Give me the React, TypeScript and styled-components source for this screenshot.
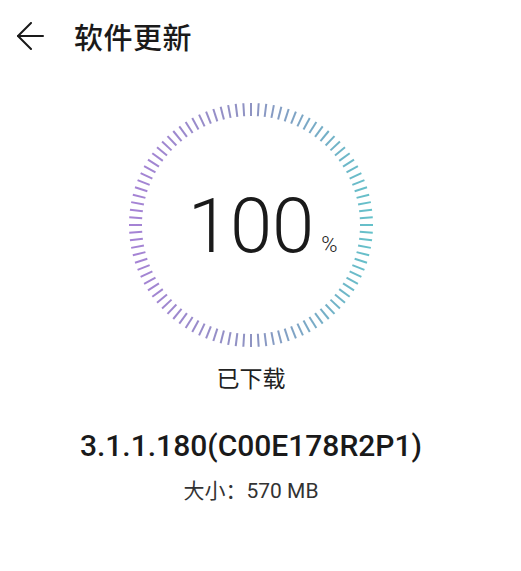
import React from "react";
import styled, { createGlobalStyle } from "styled-components";

const Global = createGlobalStyle`
  html, body { margin: 0; padding: 0; background: #ffffff; }
  body { font-family: Roboto, "Noto Sans CJK SC", sans-serif; color: #1a1a1a; }
`;

const Page = styled.div`
  width: 502px;
  display: flex;
  flex-direction: column;
  align-items: center;
`;

const Header = styled.header`
  align-self: stretch;
  height: 72px;
  display: flex;
  align-items: center;
  padding-left: 16px;
  gap: 30px;
`;

const BackButton = styled.button`
  border: 0;
  background: none;
  padding: 0;
  width: 28px;
  height: 28px;
  display: flex;
  align-items: center;
  justify-content: center;
  color: #1a1a1a;
`;

const Title = styled.h1`
  margin: 0;
  font-family: "Noto Sans CJK SC", sans-serif;
  font-size: 29px;
  font-weight: 500;
  line-height: 1;
  letter-spacing: 0.5px;
  color: #1a1a1a;
`;

const Ring = styled.div`
  margin-top: 28px;
  width: 250px;
  height: 250px;
  display: grid;
  place-items: center;
  & > * { grid-area: 1 / 1; }
`;

const Value = styled.div`
  position: relative;
  font-family: Roboto, sans-serif;
  font-weight: 300;
  font-size: 76px;
  line-height: 76px;
  color: #1a1a1a;
  margin-top: 2px;
`;

const Percent = styled.span`
  position: absolute;
  left: 100%;
  bottom: 8px;
  margin-left: 7px;
  font-size: 22px;
  line-height: 1;
  font-weight: 300;
`;

const Status = styled.div`
  margin-top: 12px;
  font-family: "Noto Sans CJK SC", sans-serif;
  font-size: 23px;
  line-height: 30px;
  color: #222;
`;

const Version = styled.div`
  margin-top: 37px;
  font-family: Roboto, sans-serif;
  font-weight: 500;
  font-size: 30px;
  line-height: 34px;
  color: #1a1a1a;
`;

const Size = styled.div`
  margin-top: 16px;
  font-family: Roboto, "Noto Sans CJK SC", sans-serif;
  font-size: 21px;
  line-height: 24px;
  color: #333;
`;

const ticks = Array.from({ length: 100 }, (_, i) => {
  const a = (i / 100) * Math.PI * 2;
  const c = Math.cos(a);
  const s = Math.sin(a);
  return { x1: 125 + 109 * c, y1: 125 + 109 * s, x2: 125 + 122 * c, y2: 125 + 122 * s };
});

export default function App() {
  return (
    <>
      <Global />
      <Page>
        <Header>
          <BackButton aria-label="back">
            <svg width="28" height="28" viewBox="0 0 28 28" fill="none" stroke="currentColor" strokeWidth="2" strokeLinecap="round" strokeLinejoin="round">
              <path d="M2 14H27" />
              <path d="M15 1L2 14L15 27" />
            </svg>
          </BackButton>
          <Title>软件更新</Title>
        </Header>
        <Ring>
          <svg width="250" height="250" viewBox="0 0 250 250">
            <defs>
              <linearGradient id="tickGrad" x1="0" y1="0" x2="250" y2="0" gradientUnits="userSpaceOnUse">
                <stop offset="0" stopColor="#a782d6" />
                <stop offset="0.5" stopColor="#8e93c2" />
                <stop offset="1" stopColor="#63c3ca" />
              </linearGradient>
            </defs>
            <g stroke="url(#tickGrad)" strokeWidth="2">
              {ticks.map((t, i) => (
                <line key={i} x1={t.x1} y1={t.y1} x2={t.x2} y2={t.y2} />
              ))}
            </g>
          </svg>
          <Value>
            100<Percent>%</Percent>
          </Value>
        </Ring>
        <Status>已下载</Status>
        <Version>3.1.1.180(C00E178R2P1)</Version>
        <Size>大小：570 MB</Size>
      </Page>
    </>
  );
}
